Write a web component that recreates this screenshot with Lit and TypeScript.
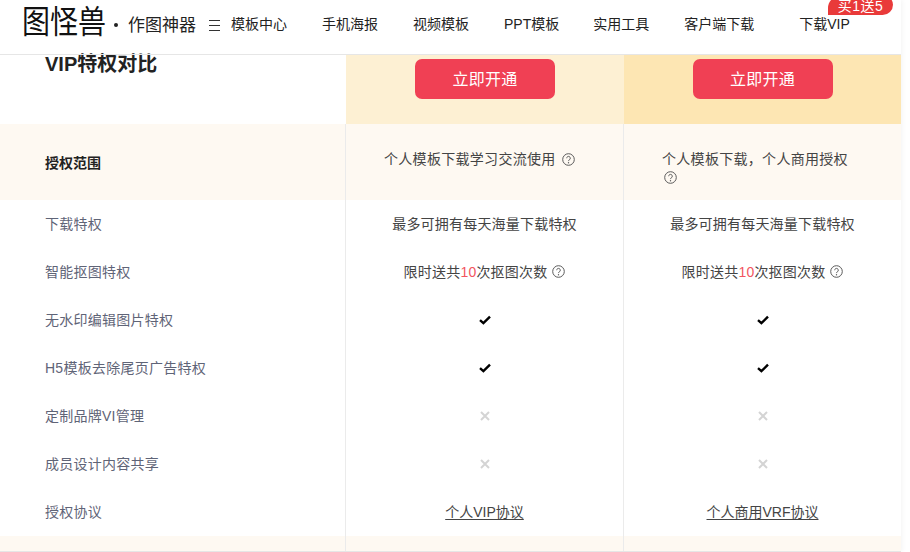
import { LitElement, html, css } from "lit";
import { customElement } from "lit/decorators.js";

const q = html`<svg class="q" viewBox="0 0 13 13" width="13" height="13"><circle cx="6.5" cy="6.5" r="5.8" fill="none" stroke="#5a5a5a" stroke-width="1"/><path d="M4.7 5.2a1.8 1.8 0 1 1 2.8 1.5c-.6.4-1 .7-1 1.4" fill="none" stroke="#5a5a5a" stroke-width="1"/><circle cx="6.5" cy="9.7" r=".7" fill="#5a5a5a"/></svg>`;
const check = html`<svg class="mark" viewBox="0 0 12 10" width="12" height="10"><path d="M1 5.2 4.4 8.2 11 1.6" fill="none" stroke="#000" stroke-width="2.4"/></svg>`;
const cross = html`<svg class="mark" viewBox="0 0 10 10" width="10" height="10"><path d="M1 1 9 9M9 1 1 9" fill="none" stroke="#d4d4d4" stroke-width="2"/></svg>`;
const limit = html`<span>限时送共<b class="num">10</b>次抠图次数</span>${q}`;

const rows: [string, unknown, unknown][] = [
  ["下载特权", "最多可拥有每天海量下载特权", "最多可拥有每天海量下载特权"],
  ["智能抠图特权", limit, limit],
  ["无水印编辑图片特权", check, check],
  ["H5模板去除尾页广告特权", check, check],
  ["定制品牌VI管理", cross, cross],
  ["成员设计内容共享", cross, cross],
  ["授权协议", html`<a>个人VIP协议</a>`, html`<a>个人商用VRF协议</a>`],
];
const nav = ["模板中心", "手机海报", "视频模板", "PPT模板", "实用工具", "客户端下载"];

@customElement("app-root")
export class AppRoot extends LitElement {
  static styles = css`
    :host { display: block; width: 910px; height: 552px; overflow: hidden; background: #fff;
      font-family: "Liberation Sans", "Noto Sans CJK SC", sans-serif; font-size: 14px; color: #444; }
    .page { width: 901px; height: 552px; display: flex; flex-direction: column; box-shadow: 0 0 6px rgba(0,0,0,.07); }
    header { height: 46px; padding: 0 0 8px 22px; flex: none; display: flex; align-items: center; border-bottom: 1px solid #e6e6e6; color: #222; position: relative; }
    .logo { font-size: 28px; line-height: 32px; width: 84px; font-weight: 400; color: #111; transform: scaleY(1.14); }
    .dot { width: 4px; height: 4px; border-radius: 50%; background: #222; margin: 3px 10px 0 8px; }
    .slogan { font-size: 17px; color: #222; width: 70px; white-space: nowrap; }
    .menu { margin: 4px 0 0 11px; width: 11px; height: 9px; border-top: 1px solid #333; border-bottom: 1px solid #333; position: relative; }
    .menu::after { content: ""; position: absolute; left: 0; right: 0; top: 4px; height: 1px; background: #333; }
    nav { display: flex; gap: 35px; margin-left: 11px; }
    nav span { white-space: nowrap; }
    nav span:nth-child(4) { margin-right: -1px; }
    .vip { margin-left: 45px; white-space: nowrap; }
    .badge { position: absolute; left: 828px; top: -4px; width: 65px; height: 19px; background: #e93a3a; color: #fff; font-size: 14px; line-height: 21px; text-align: center; letter-spacing: .5px; border-radius: 14px 10px 12px 0; }
    .top { display: grid; grid-template-columns: 346px 278px 277px; height: 69px; flex: none; }
    .title { padding: 0 0 0 45px; font-size: 20px; font-weight: 700; line-height: 20px; color: #222; margin-top: -1px; }
    .plan { display: flex; justify-content: center; align-items: flex-start; padding-top: 4px; }
    .plan.a { background: #fdf0d3; }
    .plan.b { background: #fde6b3; }
    .btn { width: 140px; height: 38px; padding-bottom: 2px; border-radius: 7px; background: #f04054; color: #fff; font-size: 16px; display: flex; align-items: center; justify-content: center; letter-spacing: .25px; }
    .row { display: grid; grid-template-columns: 345px 278px 278px; height: 48px; flex: none; }
    .row > div { display: flex; align-items: center; box-sizing: border-box; padding-bottom: 2px; }
    .row > .cell { border-left: 1px solid #ebebeb; justify-content: center; gap: 5px; letter-spacing: .2px; }
    .mark { margin-top: 2px; }
    .label { padding-left: 45px; color: #5f6477; letter-spacing: .25px; }
    .row.scope { height: 76px; background: #fef9f2; }
    .row.scope .label { color: #222; font-weight: 700; letter-spacing: 0; padding-bottom: 0; }
    .row.scope > .cell { display: block; padding: 26px 38px 0 38px; line-height: 18px; letter-spacing: .3px; }
    .scope .cell .q { margin-left: 2px; vertical-align: -1.5px; }
    .row.foot { height: 16px; border-bottom: 1px solid #e6e6e6; box-sizing: border-box; background: #fef9f2; }
    .num { color: #f25560; font-weight: 400; }
    a { color: #444; letter-spacing: 0; text-decoration: underline; text-underline-offset: 2px; }
    .q { flex: none; }
  `;

  render() {
    return html`<div class="page">
      <header>
        <div class="logo">图怪兽</div><i class="dot"></i><div class="slogan">作图神器</div>
        <i class="menu"></i>
        <nav>${nav.map((n) => html`<span>${n}</span>`)}</nav>
        <span class="vip">下载VIP</span>
        <div class="badge">买1送5</div>
      </header>
      <section class="top">
        <div class="title">VIP特权对比</div>
        <div class="plan a"><div class="btn">立即开通</div></div>
        <div class="plan b"><div class="btn">立即开通</div></div>
      </section>
      <div class="row scope">
        <div class="label">授权范围</div>
        <div class="cell">个人模板下载学习交流使用 ${q}</div>
        <div class="cell">个人模板下载，个人商用授权 ${q}</div>
      </div>
      ${rows.map((r) => html`<div class="row"><div class="label">${r[0]}</div><div class="cell">${r[1]}</div><div class="cell">${r[2]}</div></div>`)}
      <div class="row foot"><div></div><div class="cell"></div><div class="cell"></div></div>
    </div>`;
  }
}
